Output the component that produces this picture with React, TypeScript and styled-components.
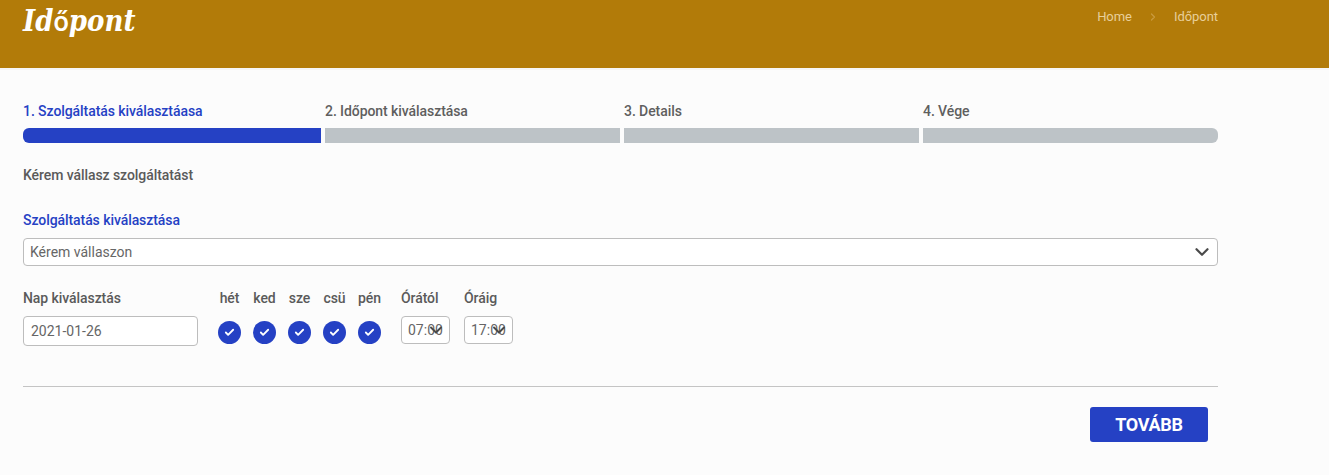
import styled, { createGlobalStyle } from "styled-components";
import { ChevronDown, ChevronRight, Check } from "lucide-react";

const GlobalStyle = createGlobalStyle`
  html, body {
    margin: 0;
    padding: 0;
    background: #fcfcfc;
    font-family: Roboto, "Liberation Sans", sans-serif;
    color: #5a5a5a;
  }
`;

const BLUE = "#2541c4";

const Header = styled.header`
  display: flex;
  justify-content: space-between;
  align-items: flex-start;
  height: 68px;
  padding: 0 111px 0 23px;
  background: #b27b09;
  border-bottom: 2px solid #f6f6f6;
`;

const Title = styled.h1`
  margin: 2px 0 0;
  font-family: "DejaVu Serif Condensed", "DejaVu Serif", serif;
  font-style: italic;
  font-weight: 700;
  font-size: 29px;
  line-height: 38px;
  color: #fff;
`;

const TitleAccent = styled.span`
  font-family: Roboto, sans-serif;
  font-style: normal;
  font-weight: 500;
  font-size: 27px;
`;

const Breadcrumb = styled.nav`
  display: flex;
  align-items: center;
  margin-top: 8px;
  font-size: 13px;
  line-height: 18px;
  letter-spacing: -0.05px;
  color: #e8cf9a;
`;

const Separator = styled.span`
  display: flex;
  margin: 0 15px 0 15px;
  color: #c99a3e;
`;

const Content = styled.main`
  width: 1195px;
  margin-left: 23px;
  padding-top: 32px;
`;

const Steps = styled.div`
  display: grid;
  grid-template-columns: 298px repeat(3, 295px);
  column-gap: 4px;
`;

const Step = styled.div<{ $active?: boolean }>`
  display: flex;
  flex-direction: column;
  gap: 7px;
  font-size: 14px;
  font-weight: 500;
  line-height: 19px;
  letter-spacing: -0.07px;
  color: ${(p) => (p.$active ? BLUE : "#5f5f5f")};
`;

const Bar = styled.div<{ $active?: boolean; $first?: boolean; $last?: boolean }>`
  height: 15px;
  background: ${(p) => (p.$active ? BLUE : "#bdc3c7")};
  border-radius: ${(p) => (p.$first ? "6px 0 0 6px" : p.$last ? "0 6px 6px 0" : "0")};
`;

const Prompt = styled.p`
  margin: 23px 0 0;
  font-size: 14px;
  font-weight: 500;
  line-height: 19px;
  letter-spacing: -0.07px;
`;

const SelectLabel = styled.div`
  margin-top: 26px;
  font-size: 14px;
  font-weight: 500;
  line-height: 19px;
  letter-spacing: -0.07px;
  color: ${BLUE};
`;

const Field = styled.div<{ $width: number; $height: number }>`
  display: flex;
  align-items: center;
  position: relative;
  box-sizing: border-box;
  width: ${(p) => p.$width}px;
  height: ${(p) => p.$height}px;
  background: #fff;
  border: 1px solid #bdbdbd;
  border-radius: 4px;
  font-size: 14px;
  color: #666;
`;

const FieldValue = styled.span<{ $inset: number }>`
  padding-left: ${(p) => p.$inset}px;
  white-space: nowrap;
`;

const Arrow = styled.span<{ $right: number }>`
  position: absolute;
  top: 50%;
  right: ${(p) => p.$right}px;
  display: flex;
  transform: translateY(-50%);
  color: #4a4a4a;
`;

const SelectField = styled(Field)`
  margin-top: 8px;
`;

const Filters = styled.div`
  display: flex;
  margin-top: 24px;
  height: 57px;
`;

const Column = styled.div<{ $width: number }>`
  display: flex;
  flex-direction: column;
  width: ${(p) => p.$width}px;
`;

const ColumnLabel = styled.div`
  height: 26px;
  font-size: 14px;
  font-weight: 500;
  line-height: 17px;
  letter-spacing: -0.07px;
  white-space: nowrap;
`;

const Days = styled.div`
  display: flex;
  margin-left: 20px;
  margin-right: 20px;
`;

const Day = styled.div`
  display: flex;
  flex-direction: column;
  align-items: center;
  width: 23px;
  margin-right: 12px;
  &:last-child {
    margin-right: 0;
  }
`;

const DayLabel = styled(ColumnLabel)`
  text-align: center;
`;

const DayCheck = styled.span`
  display: flex;
  align-items: center;
  justify-content: center;
  width: 23px;
  height: 23px;
  margin-top: 5px;
  border-radius: 50%;
  background: ${BLUE};
  color: #fff;
`;

const Divider = styled.hr`
  margin: 39px 0 0;
  border: 0;
  border-top: 1px solid #c4c4c4;
`;

const Footer = styled.div`
  display: flex;
  justify-content: flex-end;
  padding: 20px 10px 0 0;
`;

const NextButton = styled.button`
  width: 118px;
  height: 35px;
  border: 0;
  border-radius: 3px;
  background: ${BLUE};
  color: #fff;
  font-family: Roboto, sans-serif;
  font-size: 18px;
  font-weight: 700;
  letter-spacing: -0.3px;
`;

const steps = [
  "1. Szolgáltatás kiválasztáasa",
  "2. Időpont kiválasztása",
  "3. Details",
  "4. Vége",
];
const days = ["hét", "ked", "sze", "csü", "pén"];

const TimeColumn = ({ label, value, width }: { label: string; value: string; width: number }) => (
  <Column $width={width}>
    <ColumnLabel>{label}</ColumnLabel>
    <Field $width={49} $height={28}>
      <FieldValue $inset={6}>{value}</FieldValue>
      <Arrow $right={3}>
        <ChevronDown size={20} strokeWidth={2.3} />
      </Arrow>
    </Field>
  </Column>
);

export default function App() {
  return (
    <>
      <GlobalStyle />
      <Header>
        <Title>
          Id<TitleAccent>ő</TitleAccent>pont
        </Title>
        <Breadcrumb>
          Home
          <Separator>
            <ChevronRight size={12} strokeWidth={2.5} />
          </Separator>
          Időpont
        </Breadcrumb>
      </Header>
      <Content>
        <Steps>
          {steps.map((step, i) => (
            <Step key={step} $active={i === 0}>
              {step}
              <Bar $active={i === 0} $first={i === 0} $last={i === steps.length - 1} />
            </Step>
          ))}
        </Steps>
        <Prompt>Kérem vállasz szolgáltatást</Prompt>
        <SelectLabel>Szolgáltatás kiválasztása</SelectLabel>
        <SelectField $width={1195} $height={28}>
          <FieldValue $inset={6}>Kérem vállaszon</FieldValue>
          <Arrow $right={4}>
            <ChevronDown size={22} strokeWidth={2.4} />
          </Arrow>
        </SelectField>
        <Filters>
          <Column $width={175}>
            <ColumnLabel>Nap kiválasztás</ColumnLabel>
            <Field $width={175} $height={30}>
              <FieldValue $inset={7}>2021-01-26</FieldValue>
            </Field>
          </Column>
          <Days>
            {days.map((day) => (
              <Day key={day}>
                <DayLabel>{day}</DayLabel>
                <DayCheck>
                  <Check size={11} strokeWidth={4} />
                </DayCheck>
              </Day>
            ))}
          </Days>
          <TimeColumn label="Órától" value="07:00" width={63} />
          <TimeColumn label="Óráig" value="17:00" width={49} />
        </Filters>
        <Divider />
        <Footer>
          <NextButton>TOVÁBB</NextButton>
        </Footer>
      </Content>
    </>
  );
}
